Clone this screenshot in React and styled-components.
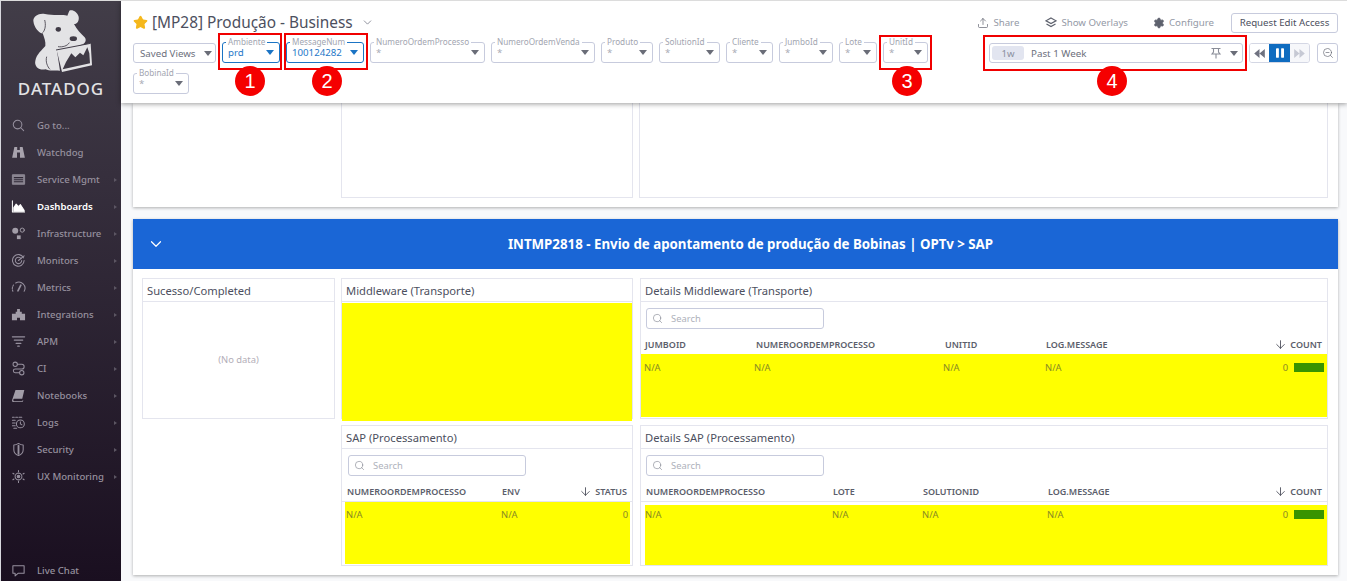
import React from "react";
import styled, { createGlobalStyle } from "styled-components";
import { Search, ArrowDown, ChevronDown, Upload, Settings, ZoomOut, Star } from "lucide-react";

const Global = createGlobalStyle`
  html, body { margin: 0; padding: 0; height: 581px; overflow: hidden; background: #f8f9fb; }
  * { box-sizing: border-box; }
  body { font-family: "Noto Sans", "Open Sans", sans-serif; }
`;

const Page = styled.div`
  display: flex; width: 1347px; height: 581px; overflow: hidden; position: relative;
  border-top: 1px solid #dcdcdc; border-left: 1px solid #d8d8de;
`;
const Sidebar = styled.aside`
  width: 120px; flex: none; display: flex; flex-direction: column;
  background: linear-gradient(180deg, #423d48 0%, #362f3d 30%, #1a0f20 100%);
`;
const Logo = styled.div`
  height: 111px; display: flex; flex-direction: column; align-items: center;
  svg { flex: none; }
`;
const LogoText = styled.div`
  font-size: 17px; font-weight: 500; color: #e2e2e4; letter-spacing: .95px; line-height: 18px; margin-top: 5px;
`;
const Nav = styled.nav`display: flex; flex-direction: column; flex: 1;`;
const NavItem = styled.div`
  height: 27px; display: flex; align-items: center; padding-left: 10px; font-size: 9.6px;
  color: ${p => (p.$active ? "#ffffff" : "#96909e")}; font-weight: ${p => (p.$active ? 600 : 500)};
  ${p => p.$bottom && "margin-top: auto; margin-bottom: -3px;"}
  svg { width: 15px; height: 15px; flex: none; margin-right: 11px; }
`;
const NavLabel = styled.span`flex: 1; white-space: nowrap;`;
const NavCaret = styled.i`
  width: 0; height: 0; margin-right: 4px; border-left: 3px solid #5c5663;
  border-top: 2.5px solid transparent; border-bottom: 2.5px solid transparent;
`;

const Main = styled.main`flex: 1; min-width: 0; display: flex; flex-direction: column; position: relative;`;
const Header = styled.header`
  height: 102px; flex: none; background: #fff; padding: 11px 9px 0 12px; position: relative; z-index: 2;
  box-shadow: 0 1px 5px rgba(0,0,0,.4);
`;
const TitleRow = styled.div`display: flex; align-items: center; height: 21px; margin-bottom: 9px;`;
const Title = styled.h1`
  margin: 0 0 0 4px; font-size: 15.4px; font-weight: 400; color: #4c4f5e; white-space: nowrap;
`;
const TitleChevron = styled.span`display: flex; margin-left: 8px; color: #6f7280;`;
const Actions = styled.div`margin-left: auto; display: flex; align-items: center;`;
const Action = styled.span`
  display: flex; align-items: center; gap: 4px; font-size: 9.7px; color: #9499a6; margin-right: ${p => p.$mr}px; white-space: nowrap;
  svg { color: #5e626e; }
`;
const EditButton = styled.button`
  width: 107px; height: 20px; padding: 0; font: 400 9.7px "Noto Sans", sans-serif; color: #4c4f5e; background: #fff;
  border: 1px solid #c7cbdd; border-radius: 3px; white-space: nowrap;
`;
const ControlRow = styled.div`display: flex; align-items: flex-start;`;
const Filters = styled.div`display: flex; flex-wrap: wrap; gap: 10px 6px; width: 830px;`;
const SavedViews = styled.div`
  width: 83px; height: 20px; margin-top: 1px; display: flex; align-items: center; justify-content: space-between;
  padding: 0 3px 0 6px; font-size: 9.7px; color: #6c6f7c; border: 1px solid #c7cbdd; border-radius: 3px; white-space: nowrap;
`;
const FilterBox = styled.div`
  position: relative; height: 21px; width: ${p => p.$w}px; display: flex; align-items: center; justify-content: space-between;
  padding: 0 5px 0 5px; border-radius: 3px; border: 1px solid ${p => (p.$active ? "#1b74c4" : "#c7cbdd")};
  font-size: 9.7px; color: ${p => (p.$active ? "#1f78c8" : "#a9acb6")};
`;
const FilterLabel = styled.label`
  position: absolute; top: -7px; left: 3px; padding: 0 2px; background: #fff; font-size: 8.2px; line-height: 11px;
  color: #a2a5b0; white-space: nowrap;
`;
const Caret = styled.i`
  width: 0; height: 0; flex: none; border-left: 4.5px solid transparent; border-right: 4.5px solid transparent;
  border-top: 5px solid ${p => p.$color || "#6a6d78"};
`;
const TimeGroup = styled.div`margin-left: auto; margin-top: 1px; display: flex;`;
const TimeBox = styled.div`
  width: 254px; height: 20px; display: flex; align-items: center; padding: 0 4px 0 2px; font-size: 9.8px; color: #6c6f7c;
  border: 1px solid #c7cbdd; border-radius: 3px; margin-right: 6px;
`;
const TimePill = styled.span`
  width: 32px; height: 14px; display: flex; align-items: center; justify-content: center; margin-right: 7px;
  background: #e2e5f0; border-radius: 3px; color: #8a8f9e; font-size: 9.6px;
`;
const TimeText = styled.span`flex: 1;`;
const PinWrap = styled.span`display: flex; margin-right: 8px; color: #8a8d98;`;
const Playback = styled.div`display: flex; height: 20px; border: 1px solid #d4d7e4; border-radius: 3px; overflow: hidden; margin-right: 7px;`;
const PlayBtn = styled.span`
  width: ${p => (p.$on ? 21 : 19)}px; display: flex; align-items: center; justify-content: center; margin: -1px 0;
  background: ${p => (p.$on ? "#0f6cc0" : p.$off ? "#f6f7fa" : "#fff")};
  color: ${p => (p.$on ? "#fff" : p.$off ? "#c6c9d4" : "#6f7280")};
`;
const ZoomBtn = styled.span`
  width: 21px; height: 20px; display: flex; align-items: center; justify-content: center; color: #5e626e;
  border: 1px solid #c7cbdd; border-radius: 3px;
`;

const Content = styled.div`flex: 1; padding: 0 9px 0 12px; min-height: 0;`;
const TopCard = styled.section`
  height: 104px; margin-bottom: 12px; background: #fff; padding: 0 10px 0 208px; display: grid;
  grid-template-columns: 292px 689px; column-gap: 6px; box-shadow: 0 1px 3px rgba(0,0,0,.3);
`;
const EmptyPanel = styled.div`height: 95px; border: 1px solid #e4e5ee; border-top: none;`;
const GroupCard = styled.section`background: #fff; box-shadow: 0 1px 3px rgba(0,0,0,.3);`;
const GroupHeader = styled.div`
  height: 50px; background: #1a66d6; color: #fff; display: flex; align-items: center; position: relative;
  padding-left: 14px;
`;
const GroupTitle = styled.h2`
  flex: 1; margin: 0; padding-right: 2px; text-align: center; font-size: 13.3px; font-weight: 700; white-space: nowrap;
`;
const GroupGrid = styled.div`
  padding: 9px 10px 9px 9px; display: grid; grid-template-columns: 193px 292px 689px; grid-template-rows: 141px 141px; gap: 6px;
`;
const Panel = styled.div`
  border: 1px solid #e4e5ee; min-width: 0; display: flex; flex-direction: column; background: #fff;
  grid-row: ${p => p.$row || "auto"}; grid-column: ${p => p.$col || "auto"};
  margin-left: ${p => (p.$nudge ? 1 : 0)}px;
`;
const PanelTitle = styled.div`
  height: 23px; flex: none; display: flex; align-items: center; padding-left: 4px; font-size: 11.2px; color: #4c4f5e;
  border-bottom: 1px solid #e4e5ee; white-space: nowrap;
`;
const NoData = styled.div`flex: 1; display: flex; align-items: center; justify-content: center; padding-bottom: 2px; font-size: 9.4px; color: #b3aeb8;`;
const YellowChart = styled.div`height: 118px; margin: 1px 0 -4px; background: #ffff00; flex: none; position: relative;`;
const SearchBox = styled.div`
  width: 178px; height: 21px; flex: none; margin: 6px 0 0 ${p => p.$ml ?? 5}px; display: flex; align-items: center; gap: 8px;
  padding-left: 5px; border: 1px solid #c7cbdd; border-radius: 3px; font-size: 9.4px; color: #aeb1bb;
  svg { color: #7d808c; }
`;
const HeaderRow = styled.div`
  display: grid; grid-template-columns: ${p => p.$cols}; height: ${p => (p.$line ? 26 : 25)}px; flex: none; align-items: center; margin-bottom: ${p => p.$mb || 0}px;
  padding: 6px ${p => p.$pr ?? 5}px 0 ${p => p.$pl ?? 5}px; font-size: 9px; font-weight: 600; color: #5b5e6b; white-space: nowrap;
  border-bottom: ${p => (p.$line ? "1px solid #e4e5ee" : "none")};
`;
const SortCell = styled.span`display: flex; align-items: center; justify-content: flex-end; gap: 3px; svg { color: #3c3f4c; }`;
const DataRow = styled.div`
  flex: 1; display: grid; grid-template-columns: ${p => p.$cols}; align-content: start; background: #ffff00;
  margin: ${p => p.$m || 0}; padding: ${p => p.$pt ?? 7}px ${p => p.$pr ?? 3}px 0 ${p => p.$pl ?? 3}px; font-size: 9.4px; color: #898a25; white-space: nowrap; min-height: 0;
`;
const CountCell = styled.span`display: flex; align-items: center; justify-content: flex-end; gap: 6px;`;
const CountBar = styled.i`width: 30px; height: 9px; background: #389400; flex: none;`;

const RedBox = styled.div`
  position: absolute; left: ${p => p.$x}px; top: ${p => p.$y}px; width: ${p => p.$w}px; height: ${p => p.$h}px;
  border: 2px solid #f00000; z-index: 5; pointer-events: none;
`;
const Badge = styled.div`
  position: absolute; left: ${p => p.$x - 15}px; top: 65px; width: 30px; height: 30px; border-radius: 50%; z-index: 6;
  background: #f50000; color: #fff; font: 400 20px/30px "Liberation Sans", Arial, sans-serif; text-align: center;
`;

const I = ({ children, fill }) => (
  <svg viewBox="0 0 16 16" fill={fill || "none"} stroke={fill ? "none" : "currentColor"} strokeWidth="1.1" strokeLinecap="round" strokeLinejoin="round">{children}</svg>
);

const icons = {
  search: <I><circle cx="7" cy="7" r="4.6" /><path d="M10.4 10.4 13.5 13.5" /></I>,
  watchdog: <I fill="#a8a3ad"><path d="M3.6 2h3v3.4h2.8V2h3l2.4 11.6H9.6V8H6.4v5.6H1.2z" /></I>,
  service: <I><rect x="1.5" y="3" width="13" height="10" rx=".5" fill="#8a8591" stroke="#8a8591" /><path d="M3.5 6h9M3.5 8.2h9M3.5 10.4h9" stroke="#2e2735" /></I>,
  dashboards: <I><path d="M1.5 2v11.8h13" stroke="#fff" /><path fill="#fff" stroke="#fff" d="M3 13V9l2.5-3.5L8 8l2-2 2 3 2 3v1z" /></I>,
  infra: <I fill="#a29da8"><circle cx="4.5" cy="5" r="3.2" /><circle cx="12" cy="4.4" r="2.2" fill="none" stroke="#a29da8" strokeWidth="1" /><path d="M6.3 10h4v4h-4z" /></I>,
  monitors: <I><path d="M13.4 5.2A6.2 6.2 0 1 0 14 8" /><path d="M10.8 6A3.4 3.4 0 1 0 11.4 8" /><path d="M8 8 14 3" /></I>,
  metrics: <I><path d="M2 12A6.5 6.5 0 0 1 3 5" strokeDasharray="1.5 1.2" /><path d="M5 3.2a6.5 6.5 0 0 1 9 8.8" /><path d="M7.4 11.5 10.5 5.5" strokeWidth="1.8" /></I>,
  integrations: <I fill="#a29da8"><path d="M6.5 2h3v3h2v2.2H15V14H9.6v-2.6H6.4V14H1V7.2h4V5h1.5z" /></I>,
  apm: <I><path d="M1.5 3h13M3.5 6.5h9M5.5 10h5M7.2 13h1.6" strokeWidth="1.3" /></I>,
  ci: <I><circle cx="4.5" cy="3.5" r="2.3" /><circle cx="11.5" cy="12.5" r="2.3" /><path d="M6.8 3.5h4.7a2.5 2.5 0 0 1 0 5h-7a2 2 0 0 0 0 4h4.7" /></I>,
  notebooks: <I fill="#a29da8"><path d="M4.8 2h9.4l-2.2 9.5H3.2A1.6 1.6 0 0 0 2.9 14h9l.8-1.2.4.5-.8 1.7H2.6C1.5 15 .9 14 1.2 12.8z" /></I>,
  logs: <I><path d="M1.5 2.5h2M5 2.5h2M8.5 2.5h3M1.5 5.5h3M1.5 8.5h3M1.5 11.5h3M3 14.2h3" /><circle cx="10" cy="9.5" r="4.2" /><path d="M10 7.2v2.3l1.7 1" /></I>,
  security: <I><path d="M8 1.5c1.8 1.2 3.5 1.7 5 1.7v5c0 3-2.2 5.2-5 6.3-2.8-1.1-5-3.3-5-6.3v-5c1.5 0 3.2-.5 5-1.7z" /><path d="M8 4v8.5" strokeWidth="2" /></I>,
  ux: <I><circle cx="8" cy="8" r="3.6" strokeDasharray="1.4 .8" /><circle cx="8" cy="8" r="1.4" fill="currentColor" /><path d="M8 1.5v1.4M8 13.1v1.4M2 4.5l1.2.8M12.8 10.7l1.2.8M2 11.5l1.2-.8M12.8 5.3l1.2-.8" /></I>,
  chat: <I><path d="M2 3h12v8H7.5L4.4 13.8V11H2z" /></I>,
};

const navItems = [
  ["search", "Go to...", false], ["watchdog", "Watchdog", false], ["service", "Service Mgmt", true],
  ["dashboards", "Dashboards", true, true], ["infra", "Infrastructure", true], ["monitors", "Monitors", true],
  ["metrics", "Metrics", true], ["integrations", "Integrations", true], ["apm", "APM", true], ["ci", "CI", true],
  ["notebooks", "Notebooks", true], ["logs", "Logs", true], ["security", "Security", true], ["ux", "UX Monitoring", true],
];

const filters = [
  ["Ambiente", "prd", 58, true], ["MessageNum", "100124282", 78, true], ["NumeroOrdemProcesso", "*", 115],
  ["NumeroOrdemVenda", "*", 104], ["Produto", "*", 52], ["SolutionId", "*", 61], ["Cliente", "*", 47],
  ["JumboId", "*", 54], ["Lote", "*", 38], ["UnitId", "*", 45], ["BobinaId", "*", 56],
];

const DARK = "#403b46";
const DogLogo = () => (
  <svg width="120" height="74" viewBox="3 3 360 222">
    <path fill="#e3e3e5" d="M100 62C100 48 118 38 135 42C150 44 165 46 178 45C186 45 194 45 202 47L208 32C218 28 232 36 236 50C238 62 232 72 222 72C230 88 242 100 254 112C262 122 254 134 240 136L224 142C206 150 186 150 172 152L172 160 180 212C160 210 150 214 136 208C118 212 102 200 106 182C110 162 126 150 136 138C138 126 132 112 128 100C118 100 102 84 100 62Z" />
    <path fill="#e3e3e5" d="M170 150 272 130 276 196 186 216Z" />
    <path fill={DARK} d="M188 208 198 186 214 160 226 172 240 158 250 166 262 142 268 160 270 190Z" />
    <path fill="none" stroke={DARK} strokeWidth="3" d="M168 150 272 130" />
    <ellipse cx="175" cy="88" rx="8" ry="7" fill={DARK} />
    <ellipse cx="220" cy="116" rx="11" ry="7" fill={DARK} />
    <path fill="none" stroke={DARK} strokeWidth="2.5" d="M208 128C202 138 188 142 174 140M128 98C136 90 138 74 134 60M140 170C136 185 142 200 150 208" />
  </svg>
);

const Filter = ({ label, value, w, active }) => (
  <FilterBox $w={w} $active={active}>
    <FilterLabel>{label}</FilterLabel>
    <span>{value}</span>
    <Caret $color={active ? "#1b74c4" : undefined} />
  </FilterBox>
);

const SearchField = ({ ml }) => (
  <SearchBox $ml={ml}><Search size={11} strokeWidth={1.3} />Search</SearchBox>
);

const Sort = ({ children }) => (
  <SortCell><ArrowDown size={13} strokeWidth={1.5} />{children}</SortCell>
);

const PinIcon = () => (
  <svg width="12" height="12" viewBox="0 0 12 12" fill="none" stroke="currentColor" strokeWidth="1.1"><path d="M1.5 1.5h9M3.5 1.5v3.6L2 7h8L8.5 5.1V1.5M6 7v4.5" /></svg>
);
const RewindIcon = () => (
  <svg width="11" height="9" viewBox="0 0 13 11" fill="currentColor"><path d="M6.5 0v11L0 5.5zM13 0v11L6.5 5.5z" /></svg>
);
const ForwardIcon = () => (
  <svg width="11" height="9" viewBox="0 0 13 11" fill="currentColor"><path d="M0 0v11l6.5-5.5zM6.5 0v11L13 5.5z" /></svg>
);
const PauseIcon = () => (
  <svg width="8" height="10" viewBox="0 0 10 12" fill="currentColor"><rect width="3.6" height="12" rx=".6" /><rect x="6.4" width="3.6" height="12" rx=".6" /></svg>
);

export default function App() {
  return (
    <Page>
      <Global />
      <Sidebar>
        <Logo>
          <DogLogo />
          <LogoText>DATADOG</LogoText>
        </Logo>
        <Nav>
          {navItems.map(([icon, label, caret, active]) => (
            <NavItem key={label} $active={active}>
              {icons[icon]}
              <NavLabel>{label}</NavLabel>
              {caret && <NavCaret />}
            </NavItem>
          ))}
          <NavItem $bottom>{icons.chat}<NavLabel>Live Chat</NavLabel></NavItem>
        </Nav>
      </Sidebar>
      <Main>
        <Header>
          <TitleRow>
            <Star size={15} fill="#f5b81c" color="#f5b81c" />
            <Title>[MP28] Produção - Business</Title>
            <TitleChevron><ChevronDown size={13} strokeWidth={1.4} /></TitleChevron>
            <Actions>
              <Action $mr={26}><Upload size={12} strokeWidth={1.4} />Share</Action>
              <Action $mr={25}><svg width="12" height="12" viewBox="0 0 12 12" fill="none" stroke="currentColor" strokeWidth="1.2"><path d="M6 1 11 3.8 6 6.6 1 3.8zM1.5 7 6 9.6 10.5 7" /></svg>Show Overlays</Action>
              <Action $mr={17}><Settings size={12} fill="currentColor" strokeWidth={1.4} />Configure</Action>
              <EditButton>Request Edit Access</EditButton>
            </Actions>
          </TitleRow>
          <ControlRow>
            <Filters>
              <SavedViews>Saved Views<Caret /></SavedViews>
              {filters.map(([label, value, w, active]) => (
                <Filter key={label} label={label} value={value} w={w} active={active} />
              ))}
            </Filters>
            <TimeGroup>
              <TimeBox>
                <TimePill>1w</TimePill>
                <TimeText>Past 1 Week</TimeText>
                <PinWrap><PinIcon /></PinWrap>
                <Caret />
              </TimeBox>
              <Playback>
                <PlayBtn><RewindIcon /></PlayBtn>
                <PlayBtn $on><PauseIcon /></PlayBtn>
                <PlayBtn $off><ForwardIcon /></PlayBtn>
              </Playback>
              <ZoomBtn><ZoomOut size={12} strokeWidth={1.3} /></ZoomBtn>
            </TimeGroup>
          </ControlRow>
        </Header>
        <Content>
          <TopCard>
            <EmptyPanel />
            <EmptyPanel />
          </TopCard>
          <GroupCard>
            <GroupHeader>
              <ChevronDown size={18} strokeWidth={1.6} />
              <GroupTitle>INTMP2818 - Envio de apontamento de produção de Bobinas | OPTv &gt; SAP</GroupTitle>
            </GroupHeader>
            <GroupGrid>
              <Panel>
                <PanelTitle>Sucesso/Completed</PanelTitle>
                <NoData>(No data)</NoData>
              </Panel>
              <Panel>
                <PanelTitle>Middleware (Transporte)</PanelTitle>
                <YellowChart />
              </Panel>
              <Panel $nudge>
                <PanelTitle>Details Middleware (Transporte)</PanelTitle>
                <SearchField />
                <HeaderRow $cols="111px 189px 101px 1fr 60px" $pl={4}>
                  <span>JUMBOID</span><span>NUMEROORDEMPROCESSO</span><span>UNITID</span><span>LOG.MESSAGE</span><Sort>COUNT</Sort>
                </HeaderRow>
                <DataRow $cols="110px 189px 102px 1fr 80px" $m="0 0 1px 0">
                  <span>N/A</span><span>N/A</span><span>N/A</span><span>N/A</span>
                  <CountCell>0<CountBar /></CountCell>
                </DataRow>
              </Panel>
              <Panel $col="2" $row="2">
                <PanelTitle>SAP (Processamento)</PanelTitle>
                <SearchField ml={6} />
                <HeaderRow $cols="155px 1fr 70px" $line $pr={5}>
                  <span>NUMEROORDEMPROCESSO</span><span>ENV</span><Sort>STATUS</Sort>
                </HeaderRow>
                <DataRow $cols="155px 1fr 40px" $m="0 2px 1px 3px" $pl={1} $pr={2} $pt={6}>
                  <span>N/A</span><span>N/A</span>
                  <CountCell>0</CountCell>
                </DataRow>
              </Panel>
              <Panel $col="3" $row="2" $nudge>
                <PanelTitle>Details SAP (Processamento)</PanelTitle>
                <SearchField />
                <HeaderRow $cols="187px 90px 125px 1fr 60px" $line $mb={3} $pl={5}>
                  <span>NUMEROORDEMPROCESSO</span><span>LOTE</span><span>SOLUTIONID</span><span>LOG.MESSAGE</span><Sort>COUNT</Sort>
                </HeaderRow>
                <DataRow $cols="187px 90px 125px 1fr 80px" $m="0 0 0 4px" $pl={0} $pt={3}>
                  <span>N/A</span><span>N/A</span><span>N/A</span><span>N/A</span>
                  <CountCell>0<CountBar /></CountCell>
                </DataRow>
              </Panel>
            </GroupGrid>
          </GroupCard>
        </Content>
      </Main>
      <RedBox $x={217} $y={32} $w={64} $h={37} />
      <RedBox $x={283} $y={32} $w={84} $h={37} />
      <RedBox $x={878} $y={34} $w={53} $h={35} />
      <RedBox $x={982} $y={34} $w={264} $h={36} />
      <Badge $x={249}>1</Badge>
      <Badge $x={326}>2</Badge>
      <Badge $x={906}>3</Badge>
      <Badge $x={1111}>4</Badge>
    </Page>
  );
}
